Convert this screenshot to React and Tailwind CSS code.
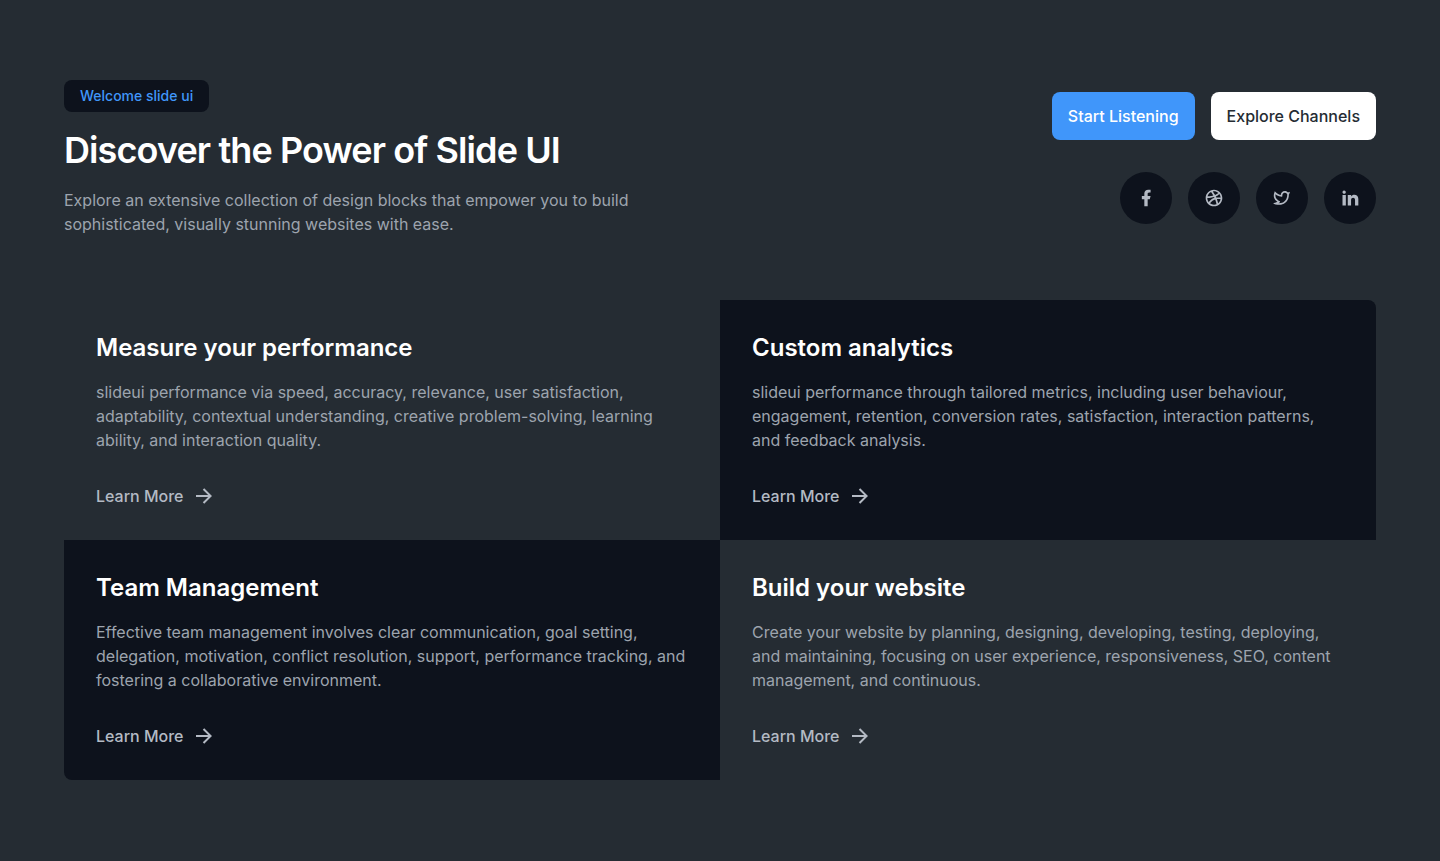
import {
  RiArrowRightLine,
  RiDribbbleLine,
  RiFacebookFill,
  RiLinkedinFill,
  RiTwitterLine,
} from 'react-icons/ri';

const socials = [
  { label: 'Facebook', Icon: RiFacebookFill },
  { label: 'Dribbble', Icon: RiDribbbleLine },
  { label: 'Twitter', Icon: RiTwitterLine },
  { label: 'LinkedIn', Icon: RiLinkedinFill },
];

const features = [
  {
    title: 'Measure your performance',
    text: 'slideui performance via speed, accuracy, relevance, user satisfaction, adaptability, contextual understanding, creative problem-solving, learning ability, and interaction quality.',
    tone: '',
  },
  {
    title: 'Custom analytics',
    text: 'slideui performance through tailored metrics, including user behaviour, engagement, retention, conversion rates, satisfaction, interaction patterns, and feedback analysis.',
    tone: 'bg-[#0d121c] rounded-tr-lg',
  },
  {
    title: 'Team Management',
    text: 'Effective team management involves clear communication, goal setting, delegation, motivation, conflict resolution, support, performance tracking, and fostering a collaborative environment.',
    tone: 'bg-[#0d121c] rounded-bl-lg',
  },
  {
    title: 'Build your website',
    text: 'Create your website by planning, designing, developing, testing, deploying, and maintaining, focusing on user experience, responsiveness, SEO, content management, and continuous.',
    tone: '',
  },
];

function Feature({ title, text, tone }) {
  return (
    <article className={`p-8 ${tone}`}>
      <h2 className="text-2xl font-semibold text-white">{title}</h2>
      <p className="mt-4 text-base text-[#9da4ae]">{text}</p>
      <a href="#" className="mt-8 inline-flex items-center gap-2 align-top font-medium text-[#b4bac4]">
        Learn More
        <RiArrowRightLine className="size-6" aria-hidden="true" />
      </a>
    </article>
  );
}

export default function App() {
  return (
    <main className="min-h-screen bg-[#252c33] px-5 py-20 font-['Inter',sans-serif] lg:px-16">
      <header className="flex flex-wrap items-center justify-between gap-8">
        <div>
          <span className="flex h-8 w-fit items-center rounded-lg bg-[#0d121c] px-4 text-sm font-medium text-[#4096fa]">
            Welcome slide ui
          </span>
          <h1 className="mt-4 text-4xl/[44px] font-semibold tracking-tight text-white">
            Discover the Power of Slide UI
          </h1>
          <p className="mt-4 max-w-xl text-base text-[#9da4ae]">
            Explore an extensive collection of design blocks that empower you to build
            sophisticated, visually stunning websites with ease.
          </p>
        </div>
        <div className="flex flex-col items-end gap-8">
          <div className="flex gap-4">
            <button type="button" className="h-12 rounded-lg bg-[#4096fa] px-4 font-medium text-white">
              Start Listening
            </button>
            <button type="button" className="h-12 rounded-lg bg-white px-4 font-medium text-[#252c33]">
              Explore Channels
            </button>
          </div>
          <nav aria-label="Social links" className="flex gap-4">
            {socials.map(({ label, Icon }) => (
              <a
                key={label}
                href="#"
                aria-label={label}
                className="flex size-13 items-center justify-center rounded-full bg-[#0d121c] text-[#b4bac4]"
              >
                <Icon className="size-5" aria-hidden="true" />
              </a>
            ))}
          </nav>
        </div>
      </header>
      <section className="mt-16 grid md:grid-cols-2">
        {features.map((feature) => (
          <Feature key={feature.title} {...feature} />
        ))}
      </section>
    </main>
  );
}
